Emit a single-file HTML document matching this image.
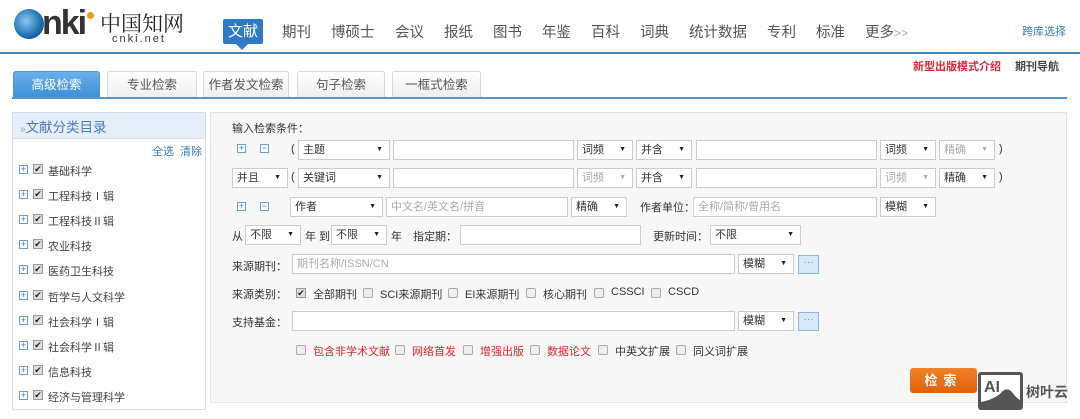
<!DOCTYPE html>
<html><head><meta charset="utf-8"><style>
*{margin:0;padding:0;box-sizing:border-box}
body{width:1080px;height:419px;background:#fff;position:relative;overflow:hidden;font-family:"Liberation Sans","Noto Sans CJK SC",sans-serif;font-size:11px;color:#333}
.a{position:absolute;white-space:nowrap}
.nav{font-size:14.5px;color:#555;top:21px}
.tab{position:absolute;top:71px;height:27px;border:1px solid #d8d8d8;border-bottom:none;background:linear-gradient(#fff,#eee);border-radius:3px 3px 0 0;font-size:12.5px;color:#555;text-align:center;line-height:26px}
.sel{position:absolute;height:20px;border:1px solid #ccc;background:#fff;font-size:11px;line-height:18px;padding-left:4px;color:#333}
.sel:after{content:"▼";position:absolute;right:6px;top:0;font-size:7px;color:#222}
.sel.d{color:#aaa}.sel.d:after{color:#aaa}
.inp{position:absolute;height:20px;border:1px solid #ccc;background:#fff;font-size:11px;line-height:18px;padding-left:4px;color:#aaa}
.pm{position:absolute;width:9px;height:9px;border:1px solid #6a9fd4;font-size:9px;line-height:7px;text-align:center;color:#3a7ac0;background:#fff}
.cb{position:absolute;width:10px;height:10px;border:1px solid #aaa;background:#eee;border-radius:2px}
.ck{position:absolute;width:10px;height:10px;border:1px solid #999;background:#ddd;font-size:9px;line-height:9px;text-align:center;color:#222}
.lb{position:absolute;font-size:11px;color:#333;white-space:nowrap}
.red{color:#d8282e}
.side{position:absolute;left:18px;font-size:11px;color:#444}
</style></head><body>
<!-- header -->
<div class="a" style="left:14px;top:9px;width:30px;height:30px;border-radius:50%;background:radial-gradient(circle at 40% 40%,#8cc8ee,#1d6cb0 60%,#0a3d6e);"></div>
<div class="a" style="left:42px;top:4px;font-size:34px;font-weight:bold;color:#333;letter-spacing:-2px;font-family:'Liberation Sans',sans-serif">nki</div>
<div class="a" style="left:87px;top:12px;width:7px;height:7px;border-radius:50%;background:#f29a1e"></div>
<div class="a" style="left:100px;top:8px;font-size:21px;color:#222;font-family:'Noto Serif CJK SC',serif">中国知网</div>
<div class="a" style="left:112px;top:33px;font-size:11px;color:#333;letter-spacing:2px">cnki.net</div>
<div class="a" style="left:223px;top:19px;width:40px;height:25px;background:#2e7ac4;border-radius:2px;color:#fff;font-size:15px;text-align:center;line-height:25px">文献</div>
<div class="a" style="left:236px;top:44px;border-left:6px solid transparent;border-right:6px solid transparent;border-top:6px solid #2e7ac4"></div>
<div class="a nav" style="left:282px">期刊</div>
<div class="a nav" style="left:331px">博硕士</div>
<div class="a nav" style="left:395px">会议</div>
<div class="a nav" style="left:444px">报纸</div>
<div class="a nav" style="left:493px">图书</div>
<div class="a nav" style="left:542px">年鉴</div>
<div class="a nav" style="left:591px">百科</div>
<div class="a nav" style="left:640px">词典</div>
<div class="a nav" style="left:689px">统计数据</div>
<div class="a nav" style="left:767px">专利</div>
<div class="a nav" style="left:816px">标准</div>
<div class="a nav" style="left:865px">更多<span style="color:#aaa;font-size:12px">&gt;&gt;</span></div>
<div class="a" style="left:1022px;top:23px;font-size:11px;color:#3a7ac0">跨库选择</div>
<div class="a" style="left:0;top:52px;width:1080px;height:2px;background:#4a84b4"></div>
<div class="a" style="left:913px;top:58px;font-size:11px;font-weight:bold;color:#d8283a">新型出版模式介绍</div>
<div class="a" style="left:1015px;top:58px;font-size:11px;font-weight:bold;color:#444">期刊导航</div>
<!-- tabs -->
<div class="tab" style="left:13px;width:87px;background:linear-gradient(#6ab0ea,#3d8fd8);color:#fff;border-color:#4a94d8">高级检索</div>
<div class="tab" style="left:107px;width:90px">专业检索</div>
<div class="tab" style="left:203px;width:86px">作者发文检索</div>
<div class="tab" style="left:297px;width:88px">句子检索</div>
<div class="tab" style="left:392px;width:89px">一框式检索</div>
<div class="a" style="left:12px;top:97px;width:1055px;height:2px;background:#5a94c8"></div>
<!-- sidebar -->
<div class="a" style="left:12px;top:112px;width:194px;height:298px;border:1px solid #d6dde6;background:#fff"></div>
<div class="a" style="left:13px;top:113px;width:192px;height:26px;background:#e6eef9;border-bottom:1px solid #d6dde6"></div>
<div class="a" style="left:20px;top:116px;font-size:13.5px;color:#4a7cc0"><span style="font-size:10px;color:#8ab">»</span>文献分类目录</div>
<div class="a" style="left:152px;top:143px;font-size:11px;color:#3a7ac0">全选&nbsp;&nbsp;清除</div>
<div id="sb"></div>
<!-- main panel -->
<div class="a" style="left:210px;top:112px;width:857px;height:291px;border:1px solid #e4e4e4;background:#f7f7f7"></div>
<div class="lb" style="left:232px;top:120px">输入检索条件：</div>
<!-- row1 -->
<div class="pm" style="left:237px;top:144px">+</div><div class="pm" style="left:260px;top:144px">−</div>
<div class="lb" style="left:291px;top:143px">(</div>
<div class="sel" style="left:298px;top:140px;width:92px">主题</div>
<div class="inp" style="left:393px;top:140px;width:181px"></div>
<div class="sel" style="left:577px;top:140px;width:56px">词频</div>
<div class="sel" style="left:636px;top:140px;width:56px">并含</div>
<div class="inp" style="left:696px;top:140px;width:181px"></div>
<div class="sel" style="left:880px;top:140px;width:56px">词频</div>
<div class="sel d" style="left:939px;top:140px;width:56px">精确</div>
<div class="lb" style="left:999px;top:143px">)</div>
<!-- row2 -->
<div class="sel" style="left:232px;top:168px;width:56px">并且</div>
<div class="lb" style="left:291px;top:171px">(</div>
<div class="sel" style="left:298px;top:168px;width:92px">关键词</div>
<div class="inp" style="left:393px;top:168px;width:181px"></div>
<div class="sel d" style="left:577px;top:168px;width:56px">词频</div>
<div class="sel" style="left:636px;top:168px;width:56px">并含</div>
<div class="inp" style="left:696px;top:168px;width:181px"></div>
<div class="sel d" style="left:880px;top:168px;width:56px">词频</div>
<div class="sel" style="left:939px;top:168px;width:56px">精确</div>
<div class="lb" style="left:999px;top:171px">)</div>
<!-- row3 -->
<div class="pm" style="left:237px;top:202px">+</div><div class="pm" style="left:260px;top:202px">−</div>
<div class="sel" style="left:290px;top:197px;width:93px">作者</div>
<div class="inp" style="left:386px;top:197px;width:182px">中文名/英文名/拼音</div>
<div class="sel" style="left:571px;top:197px;width:56px">精确</div>
<div class="lb" style="left:640px;top:199px">作者单位：</div>
<div class="inp" style="left:693px;top:197px;width:184px">全称/简称/曾用名</div>
<div class="sel" style="left:880px;top:197px;width:56px">模糊</div>
<!-- row4 -->
<div class="lb" style="left:232px;top:228px">从</div>
<div class="sel" style="left:245px;top:225px;width:56px">不限</div>
<div class="lb" style="left:305px;top:228px">年 到</div>
<div class="sel" style="left:331px;top:225px;width:56px">不限</div>
<div class="lb" style="left:391px;top:228px">年</div>
<div class="lb" style="left:413px;top:228px">指定期：</div>
<div class="inp" style="left:460px;top:225px;width:181px"></div>
<div class="lb" style="left:653px;top:228px">更新时间：</div>
<div class="sel" style="left:710px;top:225px;width:91px">不限</div>
<!-- row5 -->
<div class="lb" style="left:232px;top:258px">来源期刊：</div>
<div class="inp" style="left:292px;top:254px;width:443px">期刊名称/ISSN/CN</div>
<div class="sel" style="left:738px;top:254px;width:56px">模糊</div>
<div class="a" style="left:798px;top:255px;width:21px;height:19px;border:1px solid #8ab8e0;background:#d8e8f6;color:#5a94c8;font-size:10px;text-align:center;line-height:14px">···</div>
<!-- row6 -->
<div class="lb" style="left:232px;top:286px">来源类别：</div>
<div class="ck" style="left:296px;top:288px">✔</div><div class="lb" style="left:313px;top:286px">全部期刊</div>
<div class="cb" style="left:363px;top:288px"></div><div class="lb" style="left:380px;top:286px">SCI来源期刊</div>
<div class="cb" style="left:448px;top:288px"></div><div class="lb" style="left:465px;top:286px">EI来源期刊</div>
<div class="cb" style="left:526px;top:288px"></div><div class="lb" style="left:543px;top:286px">核心期刊</div>
<div class="cb" style="left:594px;top:288px"></div><div class="lb" style="left:611px;top:286px">CSSCI</div>
<div class="cb" style="left:651px;top:288px"></div><div class="lb" style="left:668px;top:286px">CSCD</div>
<!-- row7 -->
<div class="lb" style="left:232px;top:314px">支持基金：</div>
<div class="inp" style="left:292px;top:311px;width:443px"></div>
<div class="sel" style="left:738px;top:311px;width:56px">模糊</div>
<div class="a" style="left:798px;top:312px;width:21px;height:19px;border:1px solid #8ab8e0;background:#d8e8f6;color:#5a94c8;font-size:10px;text-align:center;line-height:14px">···</div>
<!-- row8 -->
<div class="cb" style="left:296px;top:345px"></div><div class="lb red" style="left:313px;top:343px">包含非学术文献</div>
<div class="cb" style="left:395px;top:345px"></div><div class="lb red" style="left:412px;top:343px">网络首发</div>
<div class="cb" style="left:463px;top:345px"></div><div class="lb red" style="left:480px;top:343px">增强出版</div>
<div class="cb" style="left:530px;top:345px"></div><div class="lb red" style="left:547px;top:343px">数据论文</div>
<div class="cb" style="left:598px;top:345px"></div><div class="lb" style="left:615px;top:343px">中英文扩展</div>
<div class="cb" style="left:676px;top:345px"></div><div class="lb" style="left:693px;top:343px">同义词扩展</div>
<!-- button -->
<div class="a" style="left:910px;top:368px;width:67px;height:25px;background:linear-gradient(#f0822a,#e2600c);border-radius:3px;color:#fff;font-size:13px;font-weight:bold;text-align:center;line-height:25px;letter-spacing:6px">检索</div>
<div class="a" style="left:978px;top:372px;width:45px;height:38px;border:3px solid #555;background:#fff;border-radius:3px"></div>
<svg class="a" style="left:978px;top:372px" width="45" height="38"><text x="6" y="20" font-family="Liberation Sans" font-weight="bold" font-size="16" fill="#555">AI</text><path d="M3 35 L3 30 Q14 28 22 22 Q28 14 34 20 Q38 26 42 28 L42 35 Z" fill="#555"/></svg>
<div class="a" style="left:1026px;top:382px;font-size:14px;font-weight:bold;color:#555">树叶云</div>
<script>
var n=["基础科学","工程科技Ⅰ辑","工程科技Ⅱ辑","农业科技","医药卫生科技","哲学与人文科学","社会科学Ⅰ辑","社会科学Ⅱ辑","信息科技","经济与管理科学"],h="";
n.forEach(function(t,i){var y=163+i*25.1;h+='<div class="pm" style="left:19px;top:'+(y+2)+'px">+</div><div class="ck" style="left:33px;top:'+(y+1)+'px">✔</div><div class="side" style="left:48px;top:'+y+'px">'+t+'</div>';});
document.getElementById("sb").innerHTML=h;
</script>
</body></html>
